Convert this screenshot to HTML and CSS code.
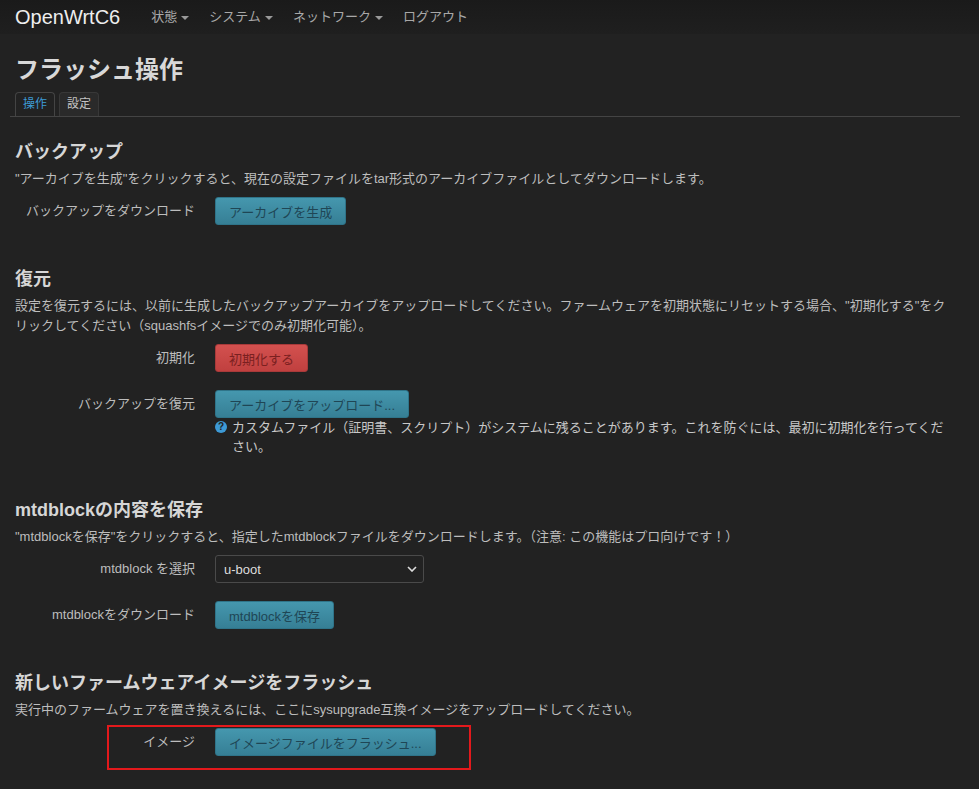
FILE: index.html
```html
<!DOCTYPE html>
<html lang="ja">
<head>
<meta charset="utf-8">
<title>フラッシュ操作</title>
<link rel="stylesheet" href="styles.css">
</head>
<body>
<header class="navbar">
  <span class="brand">OpenWrtC6</span>
  <ul class="nav">
    <li>状態<span class="caret"></span></li>
    <li>システム<span class="caret"></span></li>
    <li>ネットワーク<span class="caret"></span></li>
    <li>ログアウト</li>
  </ul>
</header>
<main class="container">
  <h2 class="page-title">フラッシュ操作</h2>
  <ul class="tabs">
    <li class="tab active">操作</li>
    <li class="tab">設定</li>
  </ul>

  <section class="section first">
    <h3>バックアップ</h3>
    <p class="desc">"アーカイブを生成"をクリックすると、現在の設定ファイルをtar形式のアーカイブファイルとしてダウンロードします。</p>
    <div class="row">
      <div class="label">バックアップをダウンロード</div>
      <div class="field"><button class="btn">アーカイブを生成</button></div>
    </div>
  </section>

  <section class="section">
    <h3>復元</h3>
    <p class="desc">設定を復元するには、以前に生成したバックアップアーカイブをアップロードしてください。ファームウェアを初期状態にリセットする場合、"初期化する"をクリックしてください（squashfsイメージでのみ初期化可能）。</p>
    <div class="row">
      <div class="label">初期化</div>
      <div class="field"><button class="btn btn-danger">初期化する</button></div>
    </div>
    <div class="row">
      <div class="label">バックアップを復元</div>
      <div class="field">
        <button class="btn">アーカイブをアップロード...</button>
        <div class="help"><span class="help-icon">?</span><span>カスタムファイル（証明書、スクリプト）がシステムに残ることがあります。これを防ぐには、最初に初期化を行ってください。</span></div>
      </div>
    </div>
  </section>

  <section class="section">
    <h3>mtdblockの内容を保存</h3>
    <p class="desc">"mtdblockを保存"をクリックすると、指定したmtdblockファイルをダウンロードします。（注意: この機能はプロ向けです！）</p>
    <div class="row">
      <div class="label">mtdblock を選択</div>
      <div class="field">
        <div class="select-wrap">
          <select class="select"><option>u-boot</option></select>
          <svg class="chev" width="10" height="6" viewBox="0 0 10 6"><polyline points="1,1 5,5 9,1" fill="none" stroke="#ddd" stroke-width="1.6"/></svg>
        </div>
      </div>
    </div>
    <div class="row">
      <div class="label">mtdblockをダウンロード</div>
      <div class="field"><button class="btn">mtdblockを保存</button></div>
    </div>
  </section>

  <section class="section">
    <h3>新しいファームウェアイメージをフラッシュ</h3>
    <p class="desc">実行中のファームウェアを置き換えるには、ここにsysupgrade互換イメージをアップロードしてください。</p>
    <div class="row annotated">
      <div class="label">イメージ</div>
      <div class="field"><button class="btn">イメージファイルをフラッシュ...</button></div>
      <div class="annot"></div>
    </div>
  </section>
</main>
</body>
</html>
```

FILE: styles.css
```css
* { box-sizing: border-box; }

body {
  margin: 0;
  background: #222222;
  color: #bbbbbb;
  font-family: "Liberation Sans", "Noto Sans CJK JP", sans-serif;
  font-size: 13px;
}

.navbar {
  height: 34px;
  display: flex;
  align-items: center;
  padding-left: 15px;
  background: linear-gradient(#1a1a1a, #1f1f1f);
}

.brand {
  font-size: 20px;
  color: #eeeeee;
  margin-right: 21px;
  line-height: 1;
}

.nav {
  display: flex;
  list-style: none;
  margin: 0;
  padding: 0;
}

.nav li {
  padding: 0 10px;
  color: #a8a8a8;
  font-size: 13px;
  line-height: 20px;
}

.caret {
  display: inline-block;
  vertical-align: middle;
  margin-left: 4px;
  border-top: 4px solid #999;
  border-left: 4px solid transparent;
  border-right: 4px solid transparent;
}

.container {
  padding: 0 29px 32px 15px;
}

.page-title {
  margin: 21px 0 0;
  font-size: 24px;
  line-height: 30px;
  font-weight: bold;
  color: #d8d8d8;
}

.tabs {
  display: flex;
  gap: 4px;
  list-style: none;
  margin: 7px -10px 0 -5px;
  padding: 0 0 0 5px;
  border-bottom: 1px solid #444;
}

.tab {
  height: 24px;
  padding: 0 7px;
  line-height: 23px;
  font-size: 12px;
  color: #c4c4c4;
  background: #2a2a2a;
  border: 1px solid #383838;
  border-bottom: none;
  border-radius: 4px 4px 0 0;
}

.tab.active {
  color: #3d9bd6;
  background: #222;
  border-color: #444;
}

.section {
  margin-top: 42px;
}

.section.first {
  margin-top: 23px;
}

.section h3 {
  margin: 0;
  font-size: 18px;
  line-height: 24px;
  font-weight: bold;
  color: #d6d6d6;
}

.desc {
  margin: 5px 0 8px;
  line-height: 20px;
  color: #bdbdbd;
}

.row {
  display: flex;
  align-items: flex-start;
  gap: 20px;
}

.row + .row {
  margin-top: 18px;
}

.annotated {
  position: relative;
}

.label {
  width: 180px;
  flex: none;
  text-align: right;
  line-height: 28px;
  color: #bdbdbd;
}

.field {
  flex: 1;
  display: flex;
  flex-direction: column;
  align-items: flex-start;
}

.btn {
  height: 28px;
  padding: 0 13px;
  font: inherit;
  font-size: 13px;
  color: #1f4655;
  background: linear-gradient(#4597ae, #367f95);
  border: 1px solid #2f7489;
  border-radius: 3px;
}

.btn-danger {
  color: #7a2020;
  background: linear-gradient(#d3514f, #c0403f);
  border-color: #a83a3a;
}

.help {
  display: flex;
  gap: 5px;
  line-height: 19px;
  color: #c8c8c8;
}

.help-icon {
  flex: none;
  width: 12px;
  height: 12px;
  margin-top: 3px;
  border-radius: 50%;
  background: #3d9ad6;
  color: #222;
  font-size: 10px;
  font-weight: bold;
  line-height: 12px;
  text-align: center;
}

.select-wrap {
  position: relative;
  width: 209px;
  height: 28px;
}

.select {
  width: 100%;
  height: 28px;
  padding: 0 8px;
  appearance: none;
  -webkit-appearance: none;
  font: inherit;
  font-size: 13px;
  color: #dddddd;
  background: #222;
  border: 1px solid #4a4a4a;
  border-radius: 3px;
}

.chev {
  position: absolute;
  right: 7px;
  top: 11px;
}

.annot {
  position: absolute;
  left: 92px;
  top: -3px;
  width: 364px;
  height: 45px;
  border: 2px solid #e3191c;
}
```
